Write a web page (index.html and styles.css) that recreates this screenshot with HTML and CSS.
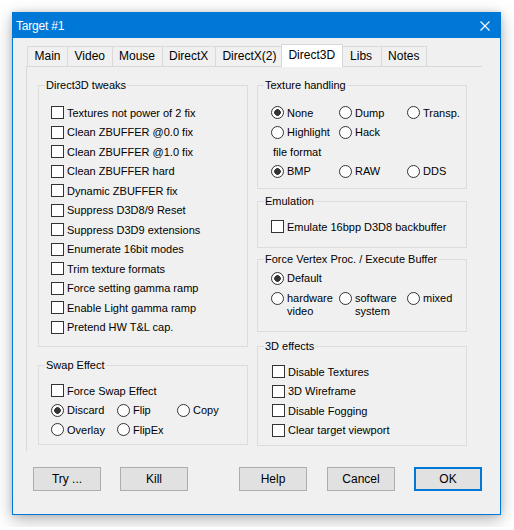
FILE: index.html
```html
<!DOCTYPE html>
<html>
<head>
<meta charset="utf-8">
<title>Target #1</title>
<link rel="stylesheet" href="styles.css">
</head>
<body>
<div class="window">
  <div class="titlebar">
    <span class="title">Target #1</span>
    <svg class="close" width="10" height="10" viewBox="0 0 10 10"><path d="M0.5 0.5L9.5 9.5M9.5 0.5L0.5 9.5" stroke="#fff" stroke-width="1.1" fill="none"/></svg>
  </div>
  <div class="client">
    <div class="tabctl">
      <div class="tabs">
        <div class="tab">Main</div>
        <div class="tab">Video</div>
        <div class="tab">Mouse</div>
        <div class="tab">DirectX</div>
        <div class="tab">DirectX(2)</div>
        <div class="tab active">Direct3D</div>
        <div class="tab">Libs</div>
        <div class="tab">Notes</div>
      </div>
      <div class="panel">
        <div class="col">
          <fieldset class="group tweaks">
            <legend>Direct3D tweaks</legend>
            <div class="body left-body">
              <div class="row"><span class="cb"></span>Textures not power of 2 fix</div>
              <div class="row"><span class="cb"></span>Clean ZBUFFER @0.0 fix</div>
              <div class="row"><span class="cb"></span>Clean ZBUFFER @1.0 fix</div>
              <div class="row"><span class="cb"></span>Clean ZBUFFER hard</div>
              <div class="row"><span class="cb"></span>Dynamic ZBUFFER fix</div>
              <div class="row"><span class="cb"></span>Suppress D3D8/9 Reset</div>
              <div class="row"><span class="cb"></span>Suppress D3D9 extensions</div>
              <div class="row"><span class="cb"></span>Enumerate 16bit modes</div>
              <div class="row"><span class="cb"></span>Trim texture formats</div>
              <div class="row"><span class="cb"></span>Force setting gamma ramp</div>
              <div class="row"><span class="cb"></span>Enable Light gamma ramp</div>
              <div class="row"><span class="cb"></span>Pretend HW T&amp;L cap.</div>
            </div>
          </fieldset>
          <fieldset class="group swap">
            <legend>Swap Effect</legend>
            <div class="body left-body pad9">
              <div class="row"><span class="cb"></span>Force Swap Effect</div>
              <div class="swapgrid">
                <div class="row"><span class="rb on"></span>Discard</div>
                <div class="row"><span class="rb"></span>Flip</div>
                <div class="row"><span class="rb"></span>Copy</div>
                <div class="row"><span class="rb"></span>Overlay</div>
                <div class="row"><span class="rb"></span>FlipEx</div>
              </div>
            </div>
          </fieldset>
        </div>
        <div class="col">
          <fieldset class="group texture">
            <legend>Texture handling</legend>
            <div class="body right-body">
              <div class="grid3">
                <div class="row"><span class="rb on"></span>None</div>
                <div class="row"><span class="rb"></span>Dump</div>
                <div class="row"><span class="rb"></span>Transp.</div>
                <div class="row"><span class="rb"></span>Highlight</div>
                <div class="row"><span class="rb"></span>Hack</div>
                <div class="row"></div>
                <div class="row caption">file format</div>
                <div class="row"><span class="rb on"></span>BMP</div>
                <div class="row"><span class="rb"></span>RAW</div>
                <div class="row"><span class="rb"></span>DDS</div>
              </div>
            </div>
          </fieldset>
          <fieldset class="group emulation">
            <legend>Emulation</legend>
            <div class="body right-body pad9">
              <div class="row"><span class="cb"></span>Emulate 16bpp D3D8 backbuffer</div>
            </div>
          </fieldset>
          <fieldset class="group vertex">
            <legend>Force Vertex Proc. / Execute Buffer</legend>
            <div class="body right-body pad-v">
              <div class="row"><span class="rb on"></span>Default</div>
              <div class="grid3 multi">
                <div class="mrow"><span class="rb"></span><span class="ml">hardware<br>video</span></div>
                <div class="mrow"><span class="rb"></span><span class="ml">software<br>system</span></div>
                <div class="mrow"><span class="rb"></span><span class="ml">mixed</span></div>
              </div>
            </div>
          </fieldset>
          <fieldset class="group effects">
            <legend>3D effects</legend>
            <div class="body right-body pad9 shift1">
              <div class="row"><span class="cb"></span>Disable Textures</div>
              <div class="row"><span class="cb"></span>3D Wireframe</div>
              <div class="row"><span class="cb"></span>Disable Fogging</div>
              <div class="row"><span class="cb"></span>Clear target viewport</div>
            </div>
          </fieldset>
        </div>
      </div>
    </div>
    <div class="buttons">
      <button class="btn">Try ...</button>
      <button class="btn">Kill</button>
      <span class="spacer"></span>
      <button class="btn help">Help</button>
      <button class="btn">Cancel</button>
      <button class="btn default">OK</button>
    </div>
  </div>
</div>
</body>
</html>
```
FILE: styles.css
```css
html, body {
  margin: 0;
}
body {
  padding: 12px;
  background: #ffffff;
  font-family: "Liberation Sans", Arial, sans-serif;
  font-size: 11px;
  color: #000;
}
.window {
  width: 489px;
  height: 503px;
  box-sizing: border-box;
  border: 1px solid #0078d7;
  background: #f0f0f0;
  box-shadow: 0 5px 16px rgba(0, 0, 0, 0.28), 0 0 6px rgba(0, 0, 0, 0.12);
  display: flex;
  flex-direction: column;
}
.titlebar {
  height: 25px;
  flex: none;
  background: #0078d7;
  color: #fff;
  display: flex;
  align-items: center;
  justify-content: space-between;
  padding: 0 10px 0 3px;
  font-size: 12px;
  letter-spacing: -0.2px;
}
.close {
  display: block;
}
.client {
  padding: 6px 0 0 13px;
}
.tabctl {
  width: 456px;
}
.tabs {
  display: flex;
  align-items: flex-end;
  height: 22px;
  padding-left: 1px;
  font-size: 12px;
}
.tab {
  box-sizing: border-box;
  height: 20px;
  min-width: 41px;
  padding: 0 6.5px;
  border: 1px solid #d9d9d9;
  border-bottom: 0;
  margin-right: -1px;
  line-height: 19px;
  text-align: center;
  white-space: nowrap;
  background: #f0f0f0;
}
.tab.active {
  height: 23px;
  line-height: 20px;
  margin: 0 -2px -1px -2px;
  background: #fff;
  position: relative;
  z-index: 1;
}
.panel {
  box-sizing: border-box;
  height: 385px;
  border-top: 1px solid #d9d9d9;
  border-left: 1px solid #d9d9d9;
  padding: 12px 0 0 11px;
  display: flex;
  gap: 9px;
}
.col {
  width: 210px;
  display: flex;
  flex-direction: column;
}
.group {
  box-sizing: border-box;
  margin: 0;
  min-width: 0;
  border: 1px solid #dcdcdc;
  padding: 0 0 0 6px;
}
.group legend {
  padding: 0 1px;
  line-height: 13px;
  font-size: 11px;
}
.tweaks { height: 268px; }
.swap { height: 86px; margin-top: 12px; }
.texture { height: 110px; }
.emulation { height: 53px; margin-top: 6px; }
.vertex { height: 79px; margin-top: 5px; }
.effects { height: 106px; margin-top: 8px; }

.body { padding-top: 11px; }
.pad9 { padding-top: 9px; }
.pad-v { padding-top: 2.5px; }
.left-body { padding-left: 6px; }
.right-body { padding-left: 7px; }
.shift1 { padding-left: 8px; }

.row {
  height: 19.5px;
  display: flex;
  align-items: center;
  white-space: nowrap;
}
.cb {
  box-sizing: border-box;
  width: 13px;
  height: 13px;
  border: 1px solid #333;
  background: #fff;
  margin-right: 3px;
  flex: none;
}
.rb {
  box-sizing: border-box;
  width: 13px;
  height: 13px;
  border: 1px solid #333;
  border-radius: 50%;
  background: #fff;
  margin-right: 3px;
  flex: none;
}
.rb.on {
  background: radial-gradient(circle, #333 0, #333 3px, #fff 3.6px);
}
.grid3 {
  display: grid;
  grid-template-columns: 68px 68px auto;
}
.caption {
  grid-column: 1 / 4;
  padding-left: 2px;
}
.swapgrid {
  display: grid;
  grid-template-columns: 66px 60px auto;
}
.multi {
  padding-top: 3.5px;
  align-items: start;
}
.mrow {
  display: flex;
  align-items: flex-start;
}
.ml {
  line-height: 13px;
}
.buttons {
  display: flex;
  gap: 19px;
  margin-top: 16px;
  padding: 0 18px 0 7px;
}
.spacer {
  flex: 1;
}
.btn {
  box-sizing: border-box;
  width: 68px;
  height: 24px;
  border: 1px solid #adadad;
  background: #e1e1e1;
  font-family: "Liberation Sans", Arial, sans-serif;
  font-size: 12px;
  color: #000;
  padding: 0;
  margin: 0;
}
.btn.help {
  margin-right: 1px;
}
.btn.default {
  border: 2px solid #0078d7;
}
```
